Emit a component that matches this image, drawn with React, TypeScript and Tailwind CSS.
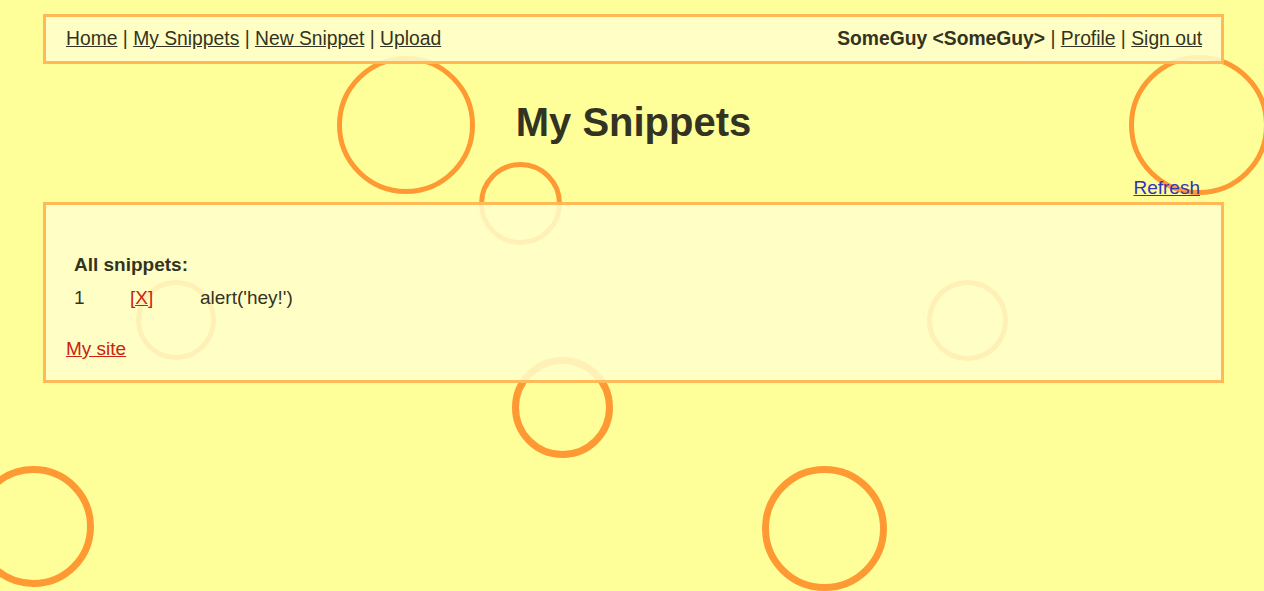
import React from 'react';

const rings = [
  { left: 337, top: 56, size: 138, border: 'border-[5px]' },
  { left: 479, top: 162, size: 83, border: 'border-[5px]' },
  { left: 1129, top: 55, size: 140, border: 'border-[5px]' },
  { left: 136, top: 280, size: 80, border: 'border-[5px]' },
  { left: 927, top: 280, size: 81, border: 'border-[5px]' },
  { left: 512, top: 357, size: 101, border: 'border-[7px]' },
  { left: -27, top: 466, size: 121, border: 'border-[7px]' },
  { left: 762, top: 466, size: 125, border: 'border-[7px]' },
];

const snippets = [{ id: 1, code: "alert('hey!')" }];

const App = () => {
  return (
    <div
      className="relative min-h-[591px] overflow-hidden bg-[#ffff99] pl-[43px] pr-[40px] pt-[14px] text-[19px] text-[#333322]"
      style={{ fontFamily: '"Liberation Sans", Arial, sans-serif' }}
    >
      {/* background rings */}
      {rings.map((r, i) => (
        <div
          key={i}
          className={`absolute rounded-full border-[#ff9933] ${r.border}`}
          style={{ left: r.left, top: r.top, width: r.size, height: r.size }}
        />
      ))}

      {/* Top bar */}
      <div className="relative z-10 flex h-[50px] items-center justify-between border-[3px] border-[#ffb957] bg-[rgba(255,255,204,0.85)] pl-[20px] pr-[19px] text-[19.3px]">
        <div>
          <a href="#" className="underline">Home</a> | <a href="#" className="underline">My Snippets</a> |{' '}
          <a href="#" className="underline">New Snippet</a> | <a href="#" className="underline">Upload</a>
        </div>
        <div>
          <span className="font-bold">SomeGuy &lt;SomeGuy&gt;</span> | <a href="#" className="underline">Profile</a> |{' '}
          <a href="#" className="underline">Sign out</a>
        </div>
      </div>

      <h1 className="relative z-10 mt-[34px] text-center text-[40px] font-bold leading-[48px]">My Snippets</h1>

      <div className="relative z-10 mt-[31px] pr-[24px] text-right leading-[22px]">
        <a href="#" className="text-[#3333bb] underline">Refresh</a>
      </div>

      {/* Snippet list */}
      <div className="relative z-10 mt-[3px] border-[3px] border-[#ffb957] bg-[rgba(255,255,204,0.85)] pl-[20px] pb-[20px] pt-[49px] leading-[22px]">
        <div className="px-2 font-bold">All snippets:</div>
        {snippets.map((s) => (
          <div key={s.id} className="mt-[11px] flex">
            <div className="w-[56px] px-2">{s.id}</div>
            <div className="w-[70px] px-2">
              <a href="#" className="text-[#cc2211] underline">[X]</a>
            </div>
            <div className="px-2">{s.code}</div>
          </div>
        ))}
        <div className="mt-[29px]">
          <a href="#" className="text-[#cc2211] underline">My site</a>
        </div>
      </div>
    </div>
  );
};

export default App;
